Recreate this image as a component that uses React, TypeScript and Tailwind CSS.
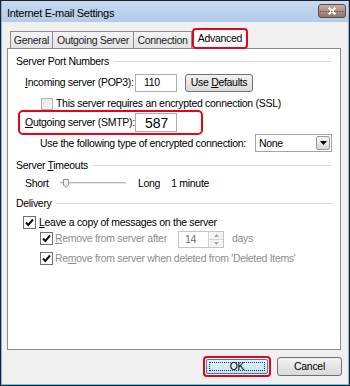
import React from 'react'

const red = 'border-[#e3051b]'

function GroupHeader({ children }: { children: React.ReactNode }) {
  return (
    <div className="flex items-center h-[14px] px-[8px]">
      <span className="whitespace-nowrap">{children}</span>
      <div className="flex-1 ml-[5px] h-px bg-[#d5d9dd]" />
    </div>
  )
}

function Check() {
  return (
    <div className="w-[13px] h-[13px] border border-[#707070] bg-white flex items-center justify-center shrink-0">
      <svg width="11" height="11" viewBox="0 0 11 11">
        <path d="M2 5.5 L4.3 8 L9 2.5" fill="none" stroke="#111" strokeWidth="2" />
      </svg>
    </div>
  )
}

function Slider() {
  return (
    <svg width="66" height="12" viewBox="0 0 66 12" className="shrink-0">
      <line x1="0" y1="5.5" x2="66" y2="5.5" stroke="#b5b5b5" strokeWidth="1" />
      <line x1="0" y1="6.5" x2="66" y2="6.5" stroke="#e6e6e6" strokeWidth="1" />
      <path d="M3.5 2.5 V8 L6 10.5 L8.5 8 V2.5 Z" fill="#f2f2f2" stroke="#8a8a8a" strokeWidth="1" />
    </svg>
  )
}

export default function App() {
  return (
    <div className="w-[350px] h-[386px] border border-[#1e2228] bg-[#f0f0f0] font-['Liberation_Sans',Arial,sans-serif] text-[10.5px] tracking-[-0.3px] text-black leading-none whitespace-nowrap overflow-hidden">
      <div className="h-full border-x border-b border-x-[#8fb2dc] border-b-[#4fd0f2] flex flex-col">
        {/* title bar */}
        <div className="h-[21px] flex items-start justify-between bg-gradient-to-b from-[#c7daf0] to-[#b2cbe8] pl-[5px] pr-[2px]">
          <span className="mt-[7px] text-[11px]">Internet E-mail Settings</span>
          <div className="mt-[3px] w-[28px] h-[14px] rounded-[3px] border border-[#5b4a45] bg-gradient-to-b from-[#c4b1a8] to-[#8c766d] flex items-center justify-center">
            <svg width="28" height="14" viewBox="0 0 28 14">
              <path d="M10.5 3.5 L17.5 10.5 M17.5 3.5 L10.5 10.5" stroke="#fff" strokeWidth="2.4" />
              <line x1="1" y1="7.5" x2="27" y2="7.5" stroke="#e3051b" strokeWidth="1" strokeDasharray="1.5 1.5" />
            </svg>
          </div>
        </div>

        {/* tabs */}
        <div className="h-[26px] flex items-end pl-[8px] text-[#222]">
          <div className="h-[17px] w-[43px] border border-b-0 border-[#898c95] bg-gradient-to-b from-[#f3f3f3] to-[#e3e3e3] flex items-center justify-center">General</div>
          <div className="h-[17px] w-[81px] border border-b-0 border-l-0 border-[#898c95] bg-gradient-to-b from-[#f3f3f3] to-[#e3e3e3] flex items-center justify-center">Outgoing Server</div>
          <div className="h-[17px] w-[58px] border border-b-0 border-l-0 border-[#898c95] bg-gradient-to-b from-[#f3f3f3] to-[#e3e3e3] flex items-center justify-center">Connection</div>
          <div className={`h-[21px] w-[56px] border-2 ${red} rounded-[4px] bg-white flex items-center justify-center mb-[-1px] relative z-10 text-black`}>Advanced</div>
        </div>

        {/* panel */}
        <div className="ml-[5px] w-[334px] h-[302px] border border-[#898c95] bg-white">
          <div className="pt-[5px]">
            <GroupHeader>Server Port Numbers</GroupHeader>
          </div>

          <div className="mt-[5px] h-[19px] flex items-center pl-[17px]">
            <span className="w-[110px]"><u>I</u>ncoming server (POP3):</span>
            <div className="w-[42px] h-[18px] border border-[#abadb3] flex items-center pl-[8px]">110</div>
            <div className="ml-[8px] w-[68px] h-[18px] rounded-[3px] border border-[#707070] bg-gradient-to-b from-[#f2f2f2] to-[#dadada] flex items-center justify-center">
              <span>Use <u>D</u>efaults</span>
            </div>
          </div>

          <div className="mt-[5px] h-[13px] flex items-center pl-[33px]">
            <div className="w-[12px] h-[12px] border border-[#b1b1b1] bg-gradient-to-br from-[#e4e4e4] to-[#f8f8f8] shrink-0" />
            <span className="ml-[3px]">This server requires an encrypted connection (SSL)</span>
          </div>

          <div className={`ml-[10px] w-[185px] h-[25px] border-2 ${red} rounded-[5px] flex items-center pl-[5px]`}>
            <span className="w-[110px]"><u>O</u>utgoing server (SMTP):</span>
            <div className="w-[42px] h-[19px] border border-[#abadb3] flex items-center pl-[9px] text-[14px] tracking-normal">587</div>
          </div>

          <div className="mt-[1px] h-[14px] flex items-center pl-[32px] pr-[8px]">
            <span>Use the following type of encrypted connection:</span>
            <div className="ml-auto w-[77px] h-[18px] border border-[#a4a4a4] bg-white flex items-center pl-[3px] pr-[1px]">
              <span className="flex-1">None</span>
              <div className="w-[14px] h-[14px] border border-[#9a9a9a] rounded-[2px] bg-gradient-to-b from-[#f4f4f4] to-[#d8d8d8] flex items-center justify-center">
                <svg width="7" height="4" viewBox="0 0 7 4"><path d="M0 0 H7 L3.5 4 Z" fill="#000" /></svg>
              </div>
            </div>
          </div>

          <div className="mt-[8px]">
            <GroupHeader>Server <u>T</u>imeouts</GroupHeader>
          </div>

          <div className="mt-[4px] h-[14px] flex items-center pl-[17px]">
            <span className="w-[35px]">Short</span>
            <Slider />
            <span className="ml-[12px]">Long</span>
            <span className="ml-[11px]">1 minute</span>
          </div>

          <div className="mt-[6px]">
            <GroupHeader>Delivery</GroupHeader>
          </div>

          <div className="mt-[6px] h-[13px] flex items-center pl-[15px]">
            <Check />
            <span className="ml-[3px]"><u>L</u>eave a copy of messages on the server</span>
          </div>

          <div className="mt-[2px] h-[15px] flex items-center pl-[32px]">
            <Check />
            <span className="ml-[2px] w-[123px] text-[#8d8d8d]"><u>R</u>emove from server after</span>
            <div className="w-[46px] h-[17px] mt-[2px] border border-[#c2c4c8] flex">
              <span className="flex-1 flex items-center pl-[6px] text-[#6d6d6d]">14</span>
              <div className="w-[15px] flex flex-col border-l border-[#d4d4d4]">
                <div className="flex-1 flex items-center justify-center bg-[#f4f4f4] border-b border-[#d4d4d4]">
                  <svg width="5" height="3" viewBox="0 0 5 3"><path d="M0 3 H5 L2.5 0 Z" fill="#a8a8a8" /></svg>
                </div>
                <div className="flex-1 flex items-center justify-center bg-[#f4f4f4]">
                  <svg width="5" height="3" viewBox="0 0 5 3"><path d="M0 0 H5 L2.5 3 Z" fill="#a8a8a8" /></svg>
                </div>
              </div>
            </div>
            <span className="ml-[8px] text-[#8d8d8d]">days</span>
          </div>

          <div className="mt-[6px] h-[13px] flex items-center pl-[32px]">
            <Check />
            <span className="ml-[2px] text-[#8d8d8d]">Re<u>m</u>ove from server when deleted from 'Deleted Items'</span>
          </div>
        </div>

        {/* buttons */}
        <div className="pt-[6px] flex justify-end items-start gap-[6px] pr-[6px]">
          <div className={`w-[68px] h-[21px] border-2 ${red} rounded-[4px] p-px`}>
            <div className="w-full h-full rounded-[2px] border border-[#3c7fb1] bg-gradient-to-b from-[#e5f4fc] to-[#bfe4f7] flex items-center justify-center">
              <div className="w-[calc(100%-4px)] h-[calc(100%-4px)] border border-dotted border-[#333] flex items-center justify-center">OK</div>
            </div>
          </div>
          <div className="mt-px w-[65px] h-[19px] rounded-[3px] border border-[#707070] bg-gradient-to-b from-[#f2f2f2] to-[#d9d9d9] flex items-center justify-center">
            Cancel
          </div>
        </div>
      </div>
    </div>
  )
}
